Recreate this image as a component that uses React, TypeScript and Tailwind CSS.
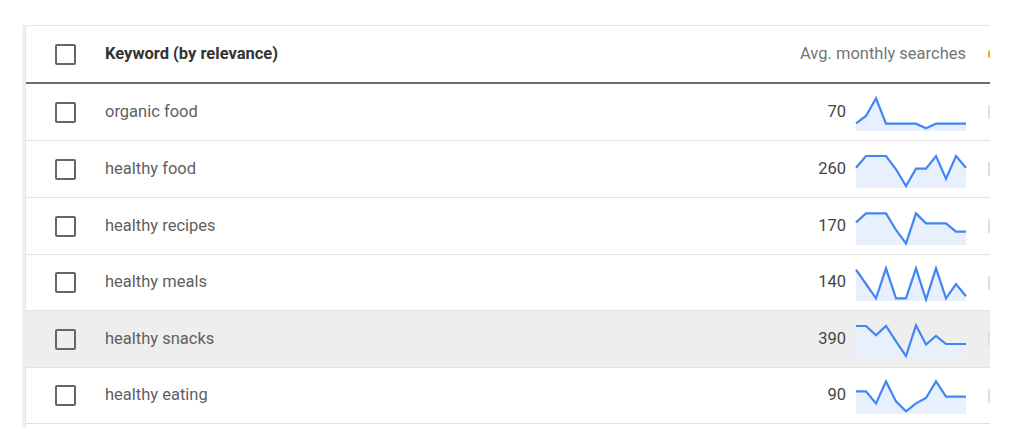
const ROWS = [
  { kw: 'organic food', n: 70, h: 'h-[57px]', pts: [26.3, 19, 1.3, 26.7, 26.7, 26.7, 26.7, 31.3, 26.7, 26.7, 26.7, 26.7] },
  { kw: 'healthy food', n: 260, h: 'h-[57px]', pts: [13.7, 2, 2, 2, 15.3, 32, 14.7, 14.7, 2, 24.7, 2, 13.7] },
  { kw: 'healthy recipes', n: 170, h: 'h-[57px]', pts: [11.4, 2.4, 2.4, 2.4, 19, 32.4, 2.4, 12.4, 12.4, 12.4, 20.7, 20.7] },
  { kw: 'healthy meals', n: 140, h: 'h-[56px]', pts: [2.7, 17, 31.3, 1.3, 31.3, 31.3, 1.3, 32.7, 1.3, 31.3, 17, 29.3] },
  { kw: 'healthy snacks', n: 390, h: 'h-[57px]', pts: [2, 2, 11.3, 2, 17.3, 32, 1.3, 20.6, 12, 20, 20, 20], hover: true },
  { kw: 'healthy eating', n: 90, h: 'h-[56px]', pts: [11.4, 11.4, 23.4, 1.4, 21.4, 31.4, 23.4, 18, 1.4, 16.7, 16.7, 16.7] },
]

function Sparkline({ pts }: { pts: number[] }) {
  const line = pts.map((y, i) => `${i * 10},${y}`).join(' ')
  const area = `0,34 ${line} 110,34`
  return (
    <svg width="110" height="34" viewBox="0 0 110 34" className="overflow-visible mt-[3px]">
      <polygon points={area} fill="#e8f0fe" />
      <polyline points={line} fill="none" stroke="#4285f4" strokeWidth="2.2" strokeLinejoin="miter" />
    </svg>
  )
}

function Checkbox() {
  return <div className="w-[21px] h-[21px] border-2 border-[#666] rounded-[2px] shrink-0" />
}

export default function App() {
  return (
    <main className="w-[1024px] h-[446px] bg-white pt-[25px] pl-[22px] font-['Roboto',sans-serif] overflow-hidden">
      <div className="flex">
        <div className="w-[3px] bg-[#f2f2f2] h-[403px]" />
        <div className="w-[965px] border-l border-t border-[#e4e4e4] overflow-hidden pb-[4px]">
          {/* header */}
          <div className="h-[58px] border-b-2 border-[#6b6b6b] flex items-center">
            <div className="w-[29px]" />
            <Checkbox />
            <div className="w-[29px]" />
            <div className="w-[500px] text-[16.5px] font-bold text-[#333] whitespace-nowrap">Keyword (by relevance)</div>
            <div className="flex-1 text-right text-[16.5px] text-[#757575] pr-[22px] whitespace-nowrap">Avg. monthly searches</div>
            <div className="w-[2px] h-[8px] bg-[#f4b400] rounded-l-full" />
          </div>

          {ROWS.map(r => (
            <div key={r.kw} className={`${r.h} border-b border-[#e2e2e2] flex items-center ${r.hover ? 'bg-[#eeeeee]' : ''}`}>
              <div className="w-[29px]" />
              <Checkbox />
              <div className="w-[29px]" />
              <div className="w-[500px] text-[16.5px] text-[#5f5f5f]">{r.kw}</div>
              <div className="flex-1 text-right text-[16.5px] text-[#444] pr-[10px]">{r.n}</div>
              <Sparkline pts={r.pts} />
              <div className="w-[22px]" />
              <div className="w-[2px] h-[14px] bg-[#e0e0e0]" />
            </div>
          ))}
        </div>
      </div>
    </main>
  )
}
